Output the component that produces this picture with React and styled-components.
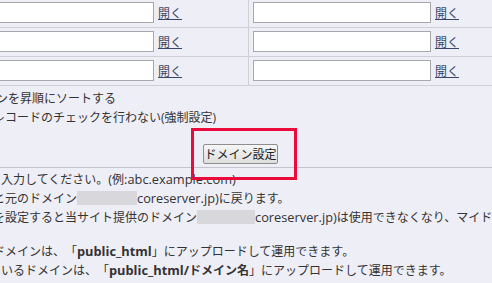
import React from "react";
import styled, { createGlobalStyle } from "styled-components";

const Global = createGlobalStyle`
  html, body {
    margin: 0;
    padding: 0;
    background: #eeeef6;
    overflow: hidden;
  }
  body {
    font-family: "Open Sans", "Noto Sans CJK JP", sans-serif;
    font-size: 12px;
    color: #333;
    text-spacing-trim: space-all;
  }
`;

const Page = styled.div`
  position: relative;
  width: 492px;
  height: 283px;
  overflow: hidden;
  margin-top: -1px;
`;

const Table = styled.div`
  display: grid;
  grid-template-columns: 277px 300px;
  margin-left: -28px;
`;

const Cell = styled.div`
  display: flex;
  align-items: center;
  gap: 4px;
  padding: 3px 4px 4px 4px;
  border-bottom: 1px solid #cfcfd8;
  border-right: ${(p) => (p.$divider ? "1px solid #cfcfd8" : "none")};
`;

const Field = styled.input`
  box-sizing: border-box;
  width: 178px;
  height: 21px;
  margin: 0;
  border: 1px solid #a8a8ac;
  background: #fff;
`;

const OpenLink = styled.a`
  font-family: "Noto Sans CJK JP", sans-serif;
  color: #3a4766;
  text-decoration: underline;
  line-height: 14px;
  cursor: pointer;
`;

const Options = styled.div`
  padding-top: 3px;
`;

const Line = styled.div`
  margin-left: ${(p) => p.$shift || 0}px;
  white-space: nowrap;
  line-height: 19px;
`;

const Roman = styled.span`
  font-size: 12.8px;
`;

const ButtonRow = styled.div`
  display: flex;
  padding: 17px 0 3px 203px;
  border-bottom: 1px solid #c4c4cc;
`;

const SetButton = styled.button`
  box-sizing: border-box;
  width: 75px;
  height: 20px;
  padding: 0;
  font-family: "Noto Sans CJK JP", sans-serif;
  font-size: 12px;
  line-height: 16px;
  color: #222;
  border: 1px solid #8e8e8e;
  border-radius: 2px;
  background: linear-gradient(#f6f6f6, #dedede);
`;

const Notes = styled.div`
  padding-top: 2px;
`;

const Para = styled.div`
  margin-bottom: ${(p) => p.$gap || 0}px;
`;

const Mask = styled.span`
  display: inline-block;
  width: ${(p) => p.$w}px;
  height: 14px;
  vertical-align: -2px;
  background: #d8d8dc;
`;

const Strong = styled.b`
  font-weight: 700;
  font-size: 12.8px;
  color: #333;
`;

const Highlight = styled.div`
  position: absolute;
  left: 191px;
  top: 129px;
  width: 106px;
  height: 52px;
  box-sizing: border-box;
  border: 3px solid #ea0a3c;
  pointer-events: none;
`;

export default function App() {
  const rows = [0, 1, 2];
  return (
    <>
      <Global />
      <Page>
        <Table>
          {rows.map((r) => (
            <React.Fragment key={r}>
              <Cell $divider>
                <Field type="text" />
                <OpenLink>開く</OpenLink>
              </Cell>
              <Cell>
                <Field type="text" />
                <OpenLink>開く</OpenLink>
              </Cell>
            </React.Fragment>
          ))}
        </Table>
        <Options>
          <Line $shift={-4}>ンを昇順にソートする</Line>
          <Line $shift={-7}>レコードのチェックを行わない(強制設定)</Line>
        </Options>
        <ButtonRow>
          <SetButton type="button">ドメイン設定</SetButton>
        </ButtonRow>
        <Notes>
          <Para $gap={15}>
            <Line $shift={1}>
              入力してください。<Roman>(</Roman>例<Roman>:abc.example.com)</Roman>
            </Line>
            <Line $shift={-7}>
              と元のドメイン<Mask $w={60} />
              <Roman>coreserver.jp)</Roman>に戻ります。
            </Line>
            <Line $shift={-7}>
              を設定すると当サイト提供のドメイン<Mask $w={58} />
              <Roman>coreserver.jp)</Roman>は使用できなくなり、マイドメイン
            </Line>
          </Para>
          <Para>
            <Line $shift={-7}>
              ドメインは、「<Strong>public_html</Strong>」にアップロードして運用できます。
            </Line>
            <Line $shift={1}>
              いるドメインは、「<Strong>public_html/</Strong>
              <b>ドメイン名</b>」にアップロードして運用できます。
            </Line>
          </Para>
        </Notes>
        <Highlight />
      </Page>
    </>
  );
}
